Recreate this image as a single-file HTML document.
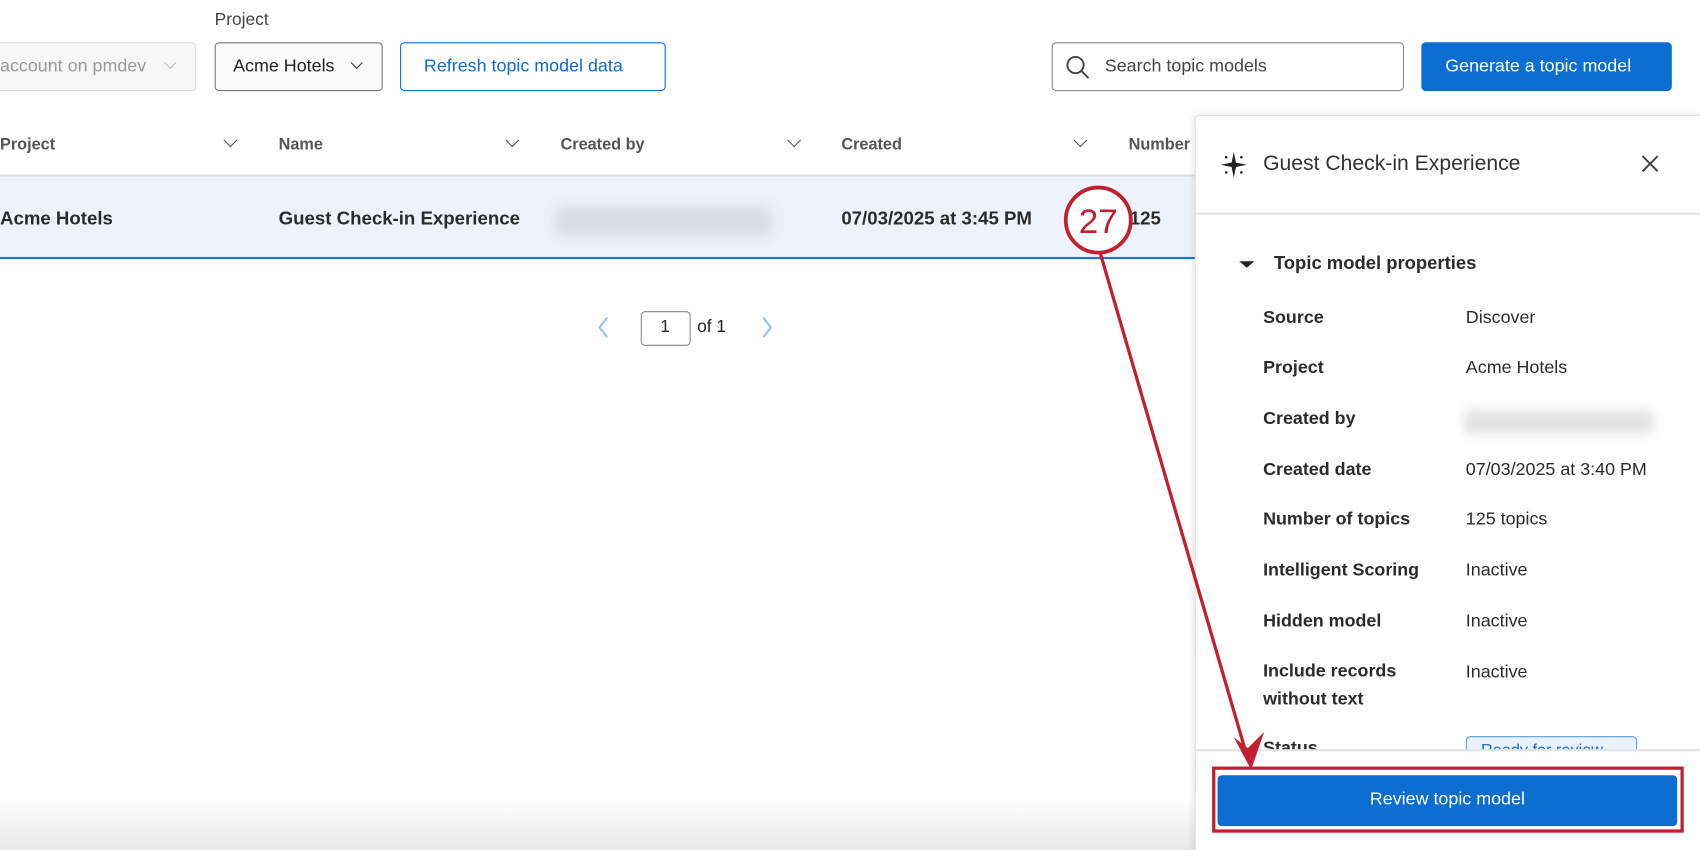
<!DOCTYPE html>
<html><head><meta charset="utf-8"><style>
html,body{margin:0;padding:0;width:1700px;height:850px;overflow:hidden;background:#fff}
#w{position:relative;width:1568px;height:784px;transform:scale(1.08418);transform-origin:0 0;font-family:"Liberation Sans",sans-serif;color:#2b2b2b;overflow:hidden;background:linear-gradient(#fff 0,#fff 735px,#e8e8e8 784px)}
.a{position:absolute;white-space:nowrap}
.box{position:absolute;box-sizing:border-box;border-radius:4px}
.chev{position:absolute;width:8px;height:8px;border-right:1.6px solid #555;border-bottom:1.6px solid #555;transform:rotate(45deg)}
.lbl{position:absolute;left:1165px;font-weight:bold;font-size:16.5px;color:#2b2b2b}
.val{position:absolute;left:1352px;font-size:16.5px;color:#2b2b2b}
</style></head><body><div id="w">
<div class="a" style="left:198px;top:10px;font-size:16px;color:#444">Project</div>
<div class="box" style="left:-10px;top:39px;width:191px;height:45px;border:1px solid #ddd;background:#f7f7f7"></div>
<div class="a" style="left:0;top:52px;font-size:16.5px;color:#999">account on pmdev</div>
<div class="chev" style="left:153px;top:54px;border-color:#bbb;width:7px;height:7px"></div>
<div class="box" style="left:198px;top:39px;width:155px;height:45px;border:1px solid #777;background:#fafafa"></div>
<div class="a" style="left:215px;top:52px;font-size:16.5px;color:#222">Acme Hotels</div>
<div class="chev" style="left:325px;top:54px;border-color:#333;width:7px;height:7px"></div>
<div class="box" style="left:369px;top:39px;width:245px;height:45px;border:1.5px solid #0b6ed0;background:#fff"></div>
<div class="a" style="left:391px;top:52px;font-size:16.5px;color:#0b6ed0">Refresh topic model data</div>
<div class="box" style="left:970px;top:39px;width:325px;height:45px;border:1px solid #888;background:#fff"></div>
<svg class="a" style="left:981px;top:49px" width="26" height="26" viewBox="0 0 26 26"><circle cx="11" cy="11" r="7.5" fill="none" stroke="#444" stroke-width="1.8"/><path d="M16.5 16.5 L23 23" stroke="#444" stroke-width="1.8"/></svg>
<div class="a" style="left:1019px;top:52px;font-size:16.5px;color:#444">Search topic models</div>
<div class="box" style="left:1311px;top:39px;width:231px;height:45px;background:#0b6ed0"></div>
<div class="a" style="left:1333px;top:52px;font-size:16.5px;color:#fff">Generate a topic model</div>

<div style="position:absolute;left:0;top:161px;width:1110px;height:1.5px;background:#ddd"></div>
<div style="position:absolute;left:0;top:163px;width:1110px;height:74px;background:#eef3fb;border-bottom:2px solid #1a73d4"></div>
<div class="a" style="left:0;top:125px;font-size:15px;font-weight:bold;color:#555">Project</div>
<div class="chev" style="left:208px;top:125px"></div>
<div class="a" style="left:257px;top:125px;font-size:15px;font-weight:bold;color:#555">Name</div>
<div class="chev" style="left:468px;top:125px"></div>
<div class="a" style="left:517px;top:125px;font-size:15px;font-weight:bold;color:#555">Created by</div>
<div class="chev" style="left:728px;top:125px"></div>
<div class="a" style="left:776px;top:125px;font-size:15px;font-weight:bold;color:#555">Created</div>
<div class="chev" style="left:992px;top:125px"></div>
<div class="a" style="left:1041px;top:125px;font-size:15px;font-weight:bold;color:#555">Number</div>
<div class="a" style="left:0;top:191px;font-size:17.2px;font-weight:bold;color:#2b2b2b">Acme Hotels</div>
<div class="a" style="left:257px;top:191px;font-size:17.2px;font-weight:bold;color:#2b2b2b">Guest Check-in Experience</div>
<div class="box" style="left:512px;top:190px;width:200px;height:28px;background:#d9dce3;filter:blur(6px)"></div>
<div class="a" style="left:776px;top:191px;font-size:17.2px;font-weight:bold;color:#2b2b2b">07/03/2025 at 3:45 PM</div>
<div class="a" style="left:1042px;top:191px;font-size:17.2px;font-weight:bold;color:#2b2b2b">125</div>

<svg class="a" style="left:546px;top:290px" width="20" height="24"><path d="M14 3 L7 12 L14 21" fill="none" stroke="#9cc3ea" stroke-width="2"/></svg>
<div class="box" style="left:591px;top:287px;width:46px;height:32px;border:1px solid #888;background:#fff"></div>
<div class="a" style="left:609px;top:293px;font-size:16px">1</div>
<div class="a" style="left:643px;top:293px;font-size:16px;color:#222">of 1</div>
<svg class="a" style="left:698px;top:290px" width="20" height="24"><path d="M6 3 L13 12 L6 21" fill="none" stroke="#9cc3ea" stroke-width="2"/></svg>

<div style="position:absolute;left:1102px;top:106px;width:480px;height:690px;background:#fff;border:1px solid #e2e2e2;box-shadow:-2px 0 6px rgba(0,0,0,.08);border-radius:4px"></div>
<svg class="a" style="left:1125px;top:139px" width="26" height="26" viewBox="0 0 26 26"><path d="M13 1 L15 11 L25 13 L15 15 L13 25 L11 15 L1 13 L11 11 Z" fill="#222"/><circle cx="6" cy="6" r="1.2" fill="#222"/><circle cx="20" cy="6" r="1.2" fill="#222"/><circle cx="6" cy="20" r="1.2" fill="#222"/><circle cx="20" cy="20" r="1.2" fill="#222"/></svg>
<div class="a" style="left:1165px;top:140px;font-size:19.5px;color:#333">Guest Check-in Experience</div>
<svg class="a" style="left:1512px;top:141px" width="20" height="20"><path d="M3 3 L17 17 M17 3 L3 17" stroke="#444" stroke-width="1.8"/></svg>
<div style="position:absolute;left:1103px;top:196px;width:470px;height:1.5px;background:#e5e5e5"></div>
<svg class="a" style="left:1143px;top:239px" width="14" height="10"><path d="M0 2 L14 2 L7 8 Z" fill="#222"/></svg>
<div class="a" style="left:1175px;top:233px;font-size:17px;font-weight:bold;color:#2b2b2b">Topic model properties</div>
<div class="lbl" style="top:284px">Source</div><div class="val" style="top:284px">Discover</div>
<div class="lbl" style="top:330px">Project</div><div class="val" style="top:330px">Acme Hotels</div>
<div class="lbl" style="top:377px">Created by</div>
<div class="box" style="left:1350px;top:378px;width:175px;height:22px;background:#e3e3e3;filter:blur(5px)"></div>
<div class="lbl" style="top:424px">Created date</div><div class="val" style="top:424px">07/03/2025 at 3:40 PM</div>
<div class="lbl" style="top:470px">Number of topics</div><div class="val" style="top:470px">125 topics</div>
<div class="lbl" style="top:517px">Intelligent Scoring</div><div class="val" style="top:517px">Inactive</div>
<div class="lbl" style="top:564px">Hidden model</div><div class="val" style="top:564px">Inactive</div>
<div class="lbl" style="top:606px;line-height:26px">Include records<br>without text</div><div class="val" style="top:611px">Inactive</div>
<div style="position:absolute;left:1103px;top:660px;width:470px;height:32px;overflow:hidden">
<div class="lbl" style="left:62px;top:21px">Status</div>
<div class="box" style="left:249px;top:19px;width:158px;height:28px;border:1.5px solid #5b9be0;background:#eaf3fd"></div>
<div class="a" style="left:263px;top:24px;font-size:15px;color:#1a6fc8">Ready for review</div>
</div>
<div style="position:absolute;left:1103px;top:691px;width:470px;height:1.5px;background:#e5e5e5"></div>
<div class="box" style="left:1118px;top:707px;width:435px;height:61px;border:3.5px solid #c0202f;border-radius:0"></div>
<div class="box" style="left:1123px;top:715px;width:424px;height:47px;background:#0b6ed0"></div>
<div class="a" style="left:1123px;top:728px;width:424px;text-align:center;font-size:16.5px;color:#fff">Review topic model</div>

<svg class="a" style="left:0;top:0" width="1568" height="784">
<path d="M1015 234 L1148 690" stroke="#c0202f" stroke-width="3" fill="none"/>
<path d="M1138 680 L1154 710 L1166 675 L1151 690 Z" fill="#c0202f"/>
<circle cx="1013" cy="203" r="30" fill="#fff" stroke="#c0202f" stroke-width="3.5"/>
<text x="1013" y="215" text-anchor="middle" font-family="Liberation Sans,sans-serif" font-size="32" fill="#c0202f" textLength="36" lengthAdjust="spacingAndGlyphs">27</text>
</svg>
</div></body></html>
